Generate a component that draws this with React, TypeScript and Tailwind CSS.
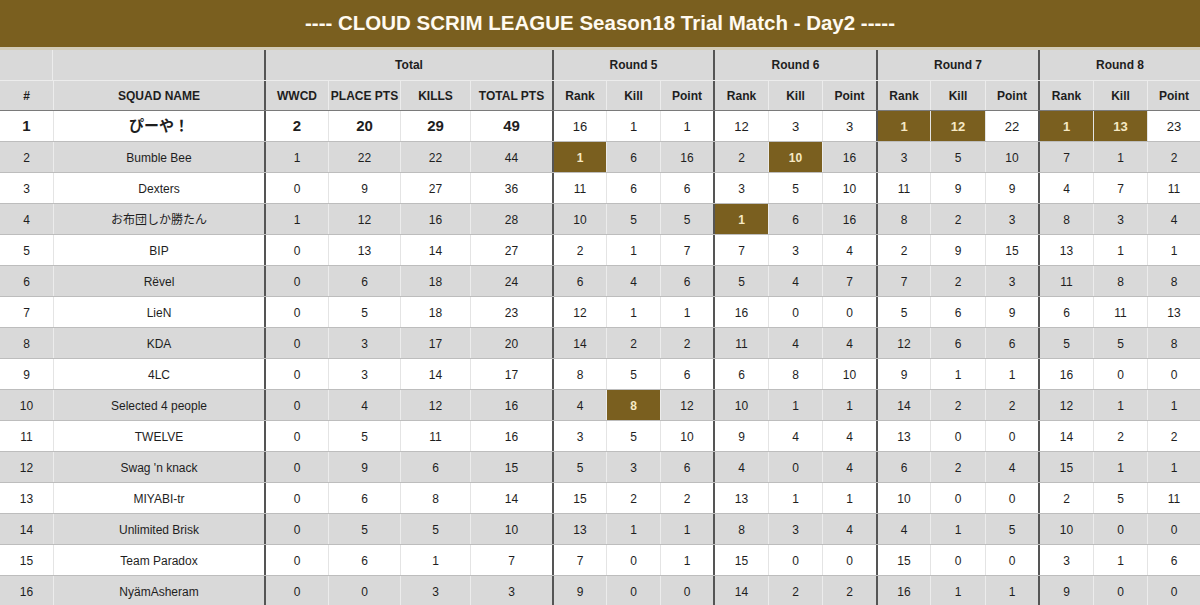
import React from "react";

const cols = "grid grid-cols-[53px_211px_64px_72px_70px_82px_54px_54px_53px_55px_54px_54px_54px_55px_53px_55px_54px_53px]";

const rows: (string | number)[][] = [
  [1, "ぴーや！", 2, 20, 29, 49, 16, 1, 1, 12, 3, 3, 1, 12, 22, 1, 13, 23],
  [2, "Bumble Bee", 1, 22, 22, 44, 1, 6, 16, 2, 10, 16, 3, 5, 10, 7, 1, 2],
  [3, "Dexters", 0, 9, 27, 36, 11, 6, 6, 3, 5, 10, 11, 9, 9, 4, 7, 11],
  [4, "お布団しか勝たん", 1, 12, 16, 28, 10, 5, 5, 1, 6, 16, 8, 2, 3, 8, 3, 4],
  [5, "BIP", 0, 13, 14, 27, 2, 1, 7, 7, 3, 4, 2, 9, 15, 13, 1, 1],
  [6, "Rëvel", 0, 6, 18, 24, 6, 4, 6, 5, 4, 7, 7, 2, 3, 11, 8, 8],
  [7, "LieN", 0, 5, 18, 23, 12, 1, 1, 16, 0, 0, 5, 6, 9, 6, 11, 13],
  [8, "KDA", 0, 3, 17, 20, 14, 2, 2, 11, 4, 4, 12, 6, 6, 5, 5, 8],
  [9, "4LC", 0, 3, 14, 17, 8, 5, 6, 6, 8, 10, 9, 1, 1, 16, 0, 0],
  [10, "Selected 4 people", 0, 4, 12, 16, 4, 8, 12, 10, 1, 1, 14, 2, 2, 12, 1, 1],
  [11, "TWELVE", 0, 5, 11, 16, 3, 5, 10, 9, 4, 4, 13, 0, 0, 14, 2, 2],
  [12, "Swag 'n knack", 0, 9, 6, 15, 5, 3, 6, 4, 0, 4, 6, 2, 4, 15, 1, 1],
  [13, "MIYABI-tr", 0, 6, 8, 14, 15, 2, 2, 13, 1, 1, 10, 0, 0, 2, 5, 11],
  [14, "Unlimited Brisk", 0, 5, 5, 10, 13, 1, 1, 8, 3, 4, 4, 1, 5, 10, 0, 0],
  [15, "Team Paradox", 0, 6, 1, 7, 7, 0, 1, 15, 0, 0, 15, 0, 0, 3, 1, 6],
  [16, "NyämAsheram", 0, 0, 3, 3, 9, 0, 0, 14, 2, 2, 16, 1, 1, 9, 0, 0],
];

// row index -> highlighted column indexes
const highlights: Record<number, number[]> = {
  0: [12, 13, 15, 16],
  1: [6, 10],
  3: [9],
  9: [7],
};

const thick = [2, 6, 9, 12, 15];
const subHeads = ["#", "SQUAD NAME", "WWCD", "PLACE PTS", "KILLS", "TOTAL PTS", "Rank", "Kill", "Point", "Rank", "Kill", "Point", "Rank", "Kill", "Point", "Rank", "Kill", "Point"];

const App = () => {
  return (
    <div className="w-[1200px] h-[605px] overflow-hidden bg-white text-[#1e1e1e] font-['Liberation_Sans','Noto_Sans_CJK_JP',sans-serif]">
      <div className="h-[47px] bg-[#7a5f1f] flex items-center justify-center text-[20.5px] font-bold text-[#fffaf0]">
        ---- CLOUD SCRIM LEAGUE Season18 Trial Match - Day2 -----
      </div>
      <div className="h-[3px] bg-[#d3ccb8]" />

      {/* group header */}
      <div className={`${cols} h-[30px] bg-[#d9d9d9] text-[12px] font-bold`}>
        <div className="border-r border-[#ececec]" />
        <div />
        <div className="col-span-4 border-l-2 border-[#555] flex items-center justify-center">Total</div>
        <div className="col-span-3 border-l-2 border-[#555] flex items-center justify-center">Round 5</div>
        <div className="col-span-3 border-l-2 border-[#555] flex items-center justify-center">Round 6</div>
        <div className="col-span-3 border-l-2 border-[#555] flex items-center justify-center">Round 7</div>
        <div className="col-span-3 border-l-2 border-[#555] flex items-center justify-center">Round 8</div>
      </div>

      {/* column header */}
      <div className={`${cols} h-[31px] bg-[#d9d9d9] text-[12px] font-bold border-t border-[#ececec] border-b border-b-[#7a7a7a]`}>
        {subHeads.map((h, i) => (
          <div
            key={i}
            className={`flex items-center justify-center ${
              thick.includes(i) ? "border-l-2 border-[#555]" : i === 0 ? "" : "border-l border-[#ececec]"
            }`}
          >
            {h}
          </div>
        ))}
      </div>

      {rows.map((r, ri) => (
        <div
          key={ri}
          className={`${cols} h-[31px] border-b border-[#bdbdbd] ${ri % 2 === 1 ? "bg-[#d9d9d9]" : "bg-white"} ${
            ri === 0 ? "text-[15px] font-bold" : "text-[12px]"
          }`}
        >
          {r.map((v, ci) => {
            const hl = highlights[ri]?.includes(ci);
            return (
              <div
                key={ci}
                className={`flex items-center justify-center pt-[1px] ${
                  thick.includes(ci)
                    ? "border-l-2 border-[#555]"
                    : ci === 0
                    ? ""
                    : ri % 2 === 1
                    ? "border-l border-[#ececec]"
                    : "border-l border-[#e4e4e4]"
                } ${hl ? "bg-[#7a5f1f] text-[#f6e9c4] font-bold" : ""} ${
                  ri === 0 && ci >= 6 && !hl ? "font-normal text-[13px]" : ""
                } ${ri === 0 && hl ? "text-[13px]" : ""}`}
              >
                {v}
              </div>
            );
          })}
        </div>
      ))}
    </div>
  );
};

export default App;
